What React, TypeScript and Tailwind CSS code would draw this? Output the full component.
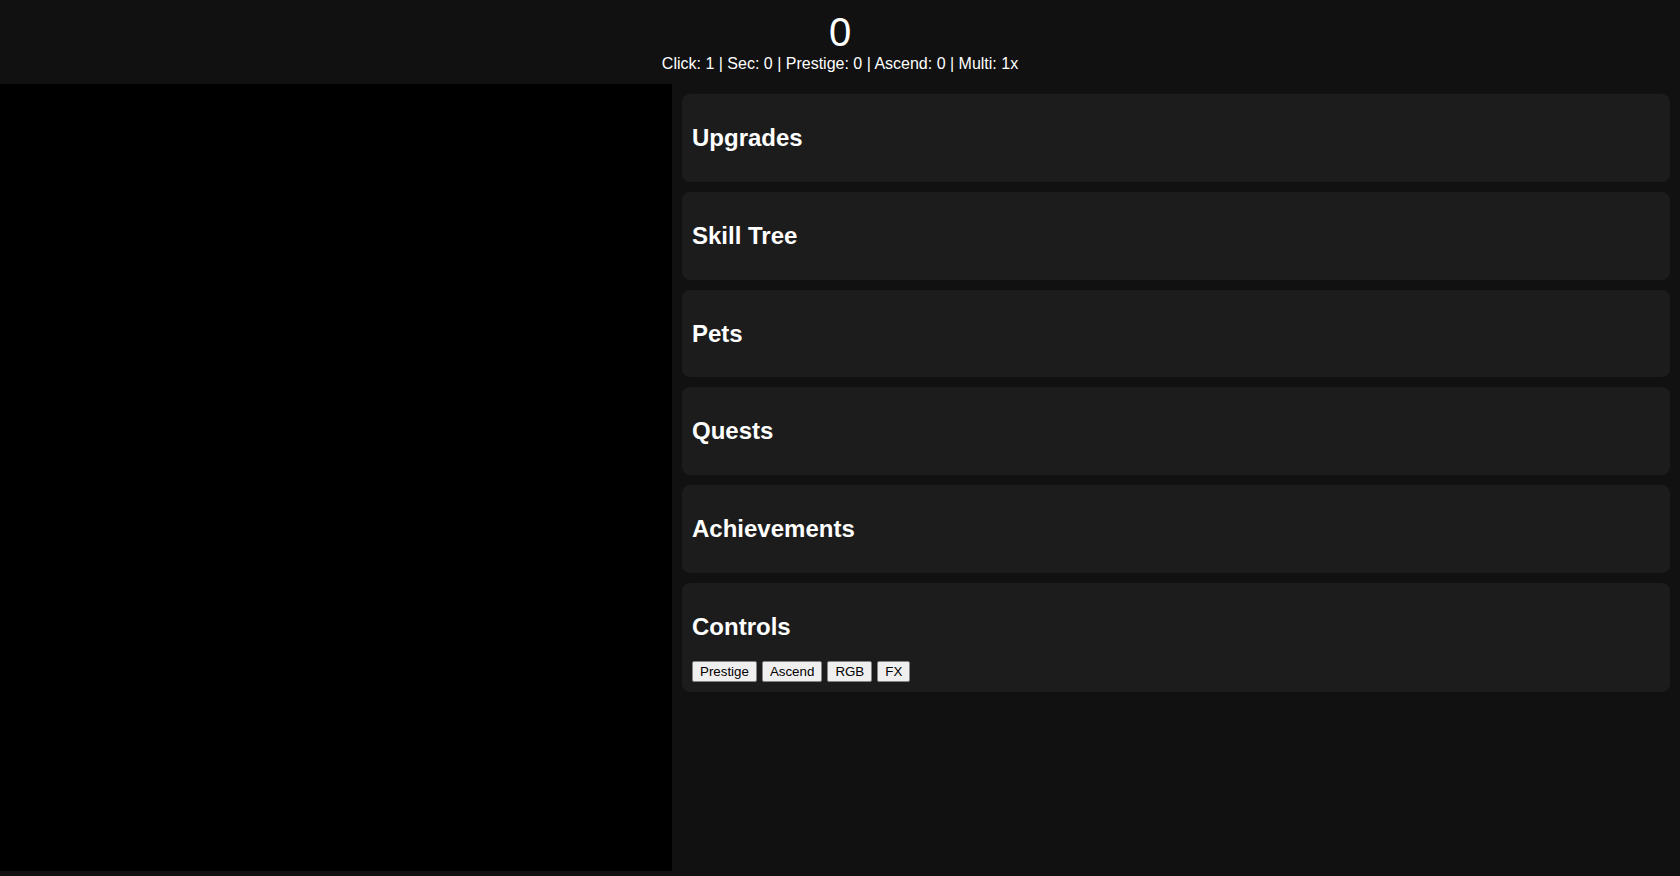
const panels = ["Upgrades", "Skill Tree", "Pets", "Quests", "Achievements"];
const controls = ["Prestige", "Ascend", "RGB", "FX"];

const Panel = ({ title, children }: { title: string; children?: React.ReactNode }) => (
  <div className="bg-[#1c1c1c] rounded-[8px] p-[10px]">
    <h2 className="text-[24px] leading-[28px] font-bold my-[19.92px]">{title}</h2>
    {children}
  </div>
);

export default function App() {
  return (
    <div className="min-h-screen bg-[#111111] text-white font-['Liberation_Sans',Arial,sans-serif]">
      <header className="h-[84px] flex flex-col items-center justify-center pb-[2px]">
        <div className="text-[40px] leading-[44px]">0</div>
        <div className="text-[16px] leading-[18px] pt-[1px]">
          Click: 1 | Sec: 0 | Prestige: 0 | Ascend: 0 | Multi: 1x
        </div>
      </header>
      <div className="flex">
        <div className="w-[672px] h-[787px] bg-black shrink-0" />
        <div className="flex-1 flex flex-col gap-[10px] p-[10px]">
          {panels.map((p) => (
            <Panel key={p} title={p} />
          ))}
          <Panel title="Controls">
            <div className="flex gap-[5px]">
              {controls.map((c) => (
                <button
                  key={c}
                  className="bg-[#efefef] text-black border border-[#858585] rounded-[2px] px-[7px] py-[2px] text-[13.333px] leading-[15px]"
                >
                  {c}
                </button>
              ))}
            </div>
          </Panel>
        </div>
      </div>
    </div>
  );
}
